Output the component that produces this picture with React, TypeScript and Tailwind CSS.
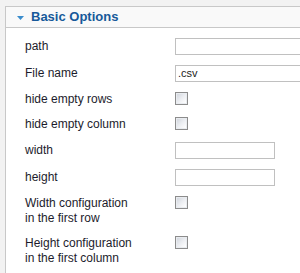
import React from "react";

function TextInput({ wide, value }: { wide?: boolean; value?: string }) {
  return (
    <div
      className={`h-[17px] border border-[#c0c0c0] bg-white flex items-center pl-[2px] text-[11px] leading-none text-[#222] shrink-0 ${
        wide ? "w-[160px]" : "w-[100px]"
      }`}
      style={{ fontFamily: '"Liberation Sans", Arial, sans-serif' }}
    >
      {value}
    </div>
  );
}

function Checkbox() {
  return (
    <div className="w-[13px] h-[13px] border border-[#8c8c8c] bg-[#e9ecf0] shrink-0 p-[1px]">
      <div className="w-full h-full bg-gradient-to-br from-[#d3d7de] via-[#eceef2] to-[#ffffff]" />
    </div>
  );
}

function Row({
  label,
  children,
  center,
}: {
  label: React.ReactNode;
  children: React.ReactNode;
  center?: boolean;
}) {
  return (
    <div className={`flex ${center ? "items-center" : "items-start"}`}>
      <div className="w-[150px] shrink-0 text-[12px] leading-[15px] text-[#1c1c2c]">{label}</div>
      {children}
    </div>
  );
}

export default function App() {
  return (
    <div
      className="w-[300px] h-[273px] bg-[#f2f2f2] pl-[5px] pt-[6px] overflow-hidden"
      style={{ fontFamily: '"Liberation Sans", Arial, sans-serif' }}
    >
      <div className="w-[320px] h-[300px] bg-white border-l border-t border-[#c8c8c8]">
        <div className="h-[21px] bg-[#f9f9f9] border-b border-[#c8c8c8] flex items-center pl-[11px]">
          <svg width="7" height="4" viewBox="0 0 7 4" className="mr-[7px] mt-[1px]">
            <polygon points="0,0 7,0 3.5,4" fill="#3a8ccc" />
          </svg>
          <span className="text-[13px] leading-[20px] font-bold text-[#17599a]">Basic Options</span>
        </div>
        <div className="pl-[19px] pt-[10px] flex flex-col gap-[10px]">
          <Row label="path" center>
            <TextInput wide />
          </Row>
          <Row label="File name" center>
            <TextInput wide value=".csv" />
          </Row>
          <Row label="hide empty rows">
            <Checkbox />
          </Row>
          <Row label="hide empty column">
            <Checkbox />
          </Row>
          <Row label="width" center>
            <TextInput />
          </Row>
          <Row label="height" center>
            <TextInput />
          </Row>
          <Row
            label={
              <>
                Width configuration
                <br />
                in the first row
              </>
            }
          >
            <Checkbox />
          </Row>
          <Row
            label={
              <>
                Height configuration
                <br />
                in the first column
              </>
            }
          >
            <Checkbox />
          </Row>
        </div>
      </div>
    </div>
  );
}
